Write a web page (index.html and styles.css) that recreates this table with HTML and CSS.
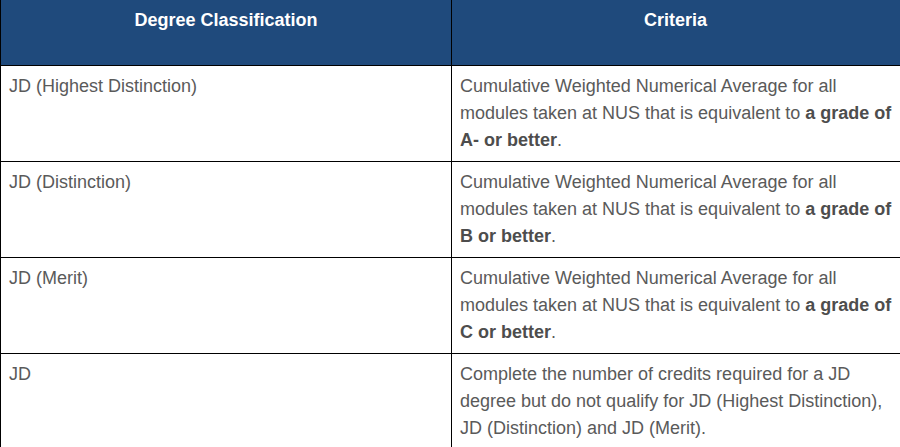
FILE: index.html
```html
<!DOCTYPE html>
<html>
<head>
<meta charset="utf-8">
<link rel="stylesheet" href="styles.css">
</head>
<body>
<table class="grades">
  <thead>
    <tr>
      <th class="col-a">Degree Classification</th>
      <th class="col-b">Criteria</th>
    </tr>
  </thead>
  <tbody>
    <tr>
      <td>JD (Highest Distinction)</td>
      <td>Cumulative Weighted Numerical Average for all modules taken at NUS that is equivalent to <strong>a grade of A- or better</strong>.</td>
    </tr>
    <tr>
      <td>JD (Distinction)</td>
      <td>Cumulative Weighted Numerical Average for all modules taken at NUS that is equivalent to <strong>a grade of B or better</strong>.</td>
    </tr>
    <tr>
      <td>JD (Merit)</td>
      <td>Cumulative Weighted Numerical Average for all modules taken at NUS that is equivalent to <strong>a grade of C or better</strong>.</td>
    </tr>
    <tr>
      <td>JD</td>
      <td>Complete the number of credits required for a JD degree but do not qualify for JD (Highest Distinction), JD (Distinction) and JD (Merit).</td>
    </tr>
  </tbody>
</table>
</body>
</html>
```

FILE: styles.css
```css
html, body {
  margin: 0;
  padding: 0;
  background: #ffffff;
  overflow: hidden;
}

.grades {
  border-collapse: collapse;
  width: 912px;
  table-layout: fixed;
  font-family: "Liberation Sans", Arial, sans-serif;
  font-size: 18px;
  line-height: 27px;
  color: #5a5a5a;
}

.grades th,
.grades td {
  border: 1px solid #000;
  text-align: left;
  vertical-align: top;
  padding: 7px 8px 7px 8px;
}

.grades thead th {
  border-top: none;
  background: #1f4a7c;
  color: #ffffff;
  font-weight: bold;
  text-align: center;
  height: 50px;
  padding-top: 7px;
  padding-bottom: 8px;
}

.grades thead .col-b {
  padding-right: 20px;
}

.grades .col-a {
  width: 434px;
}

.grades tbody tr {
  height: 96px;
}

.grades strong {
  color: #4d4d4d;
  font-weight: bold;
}
```
